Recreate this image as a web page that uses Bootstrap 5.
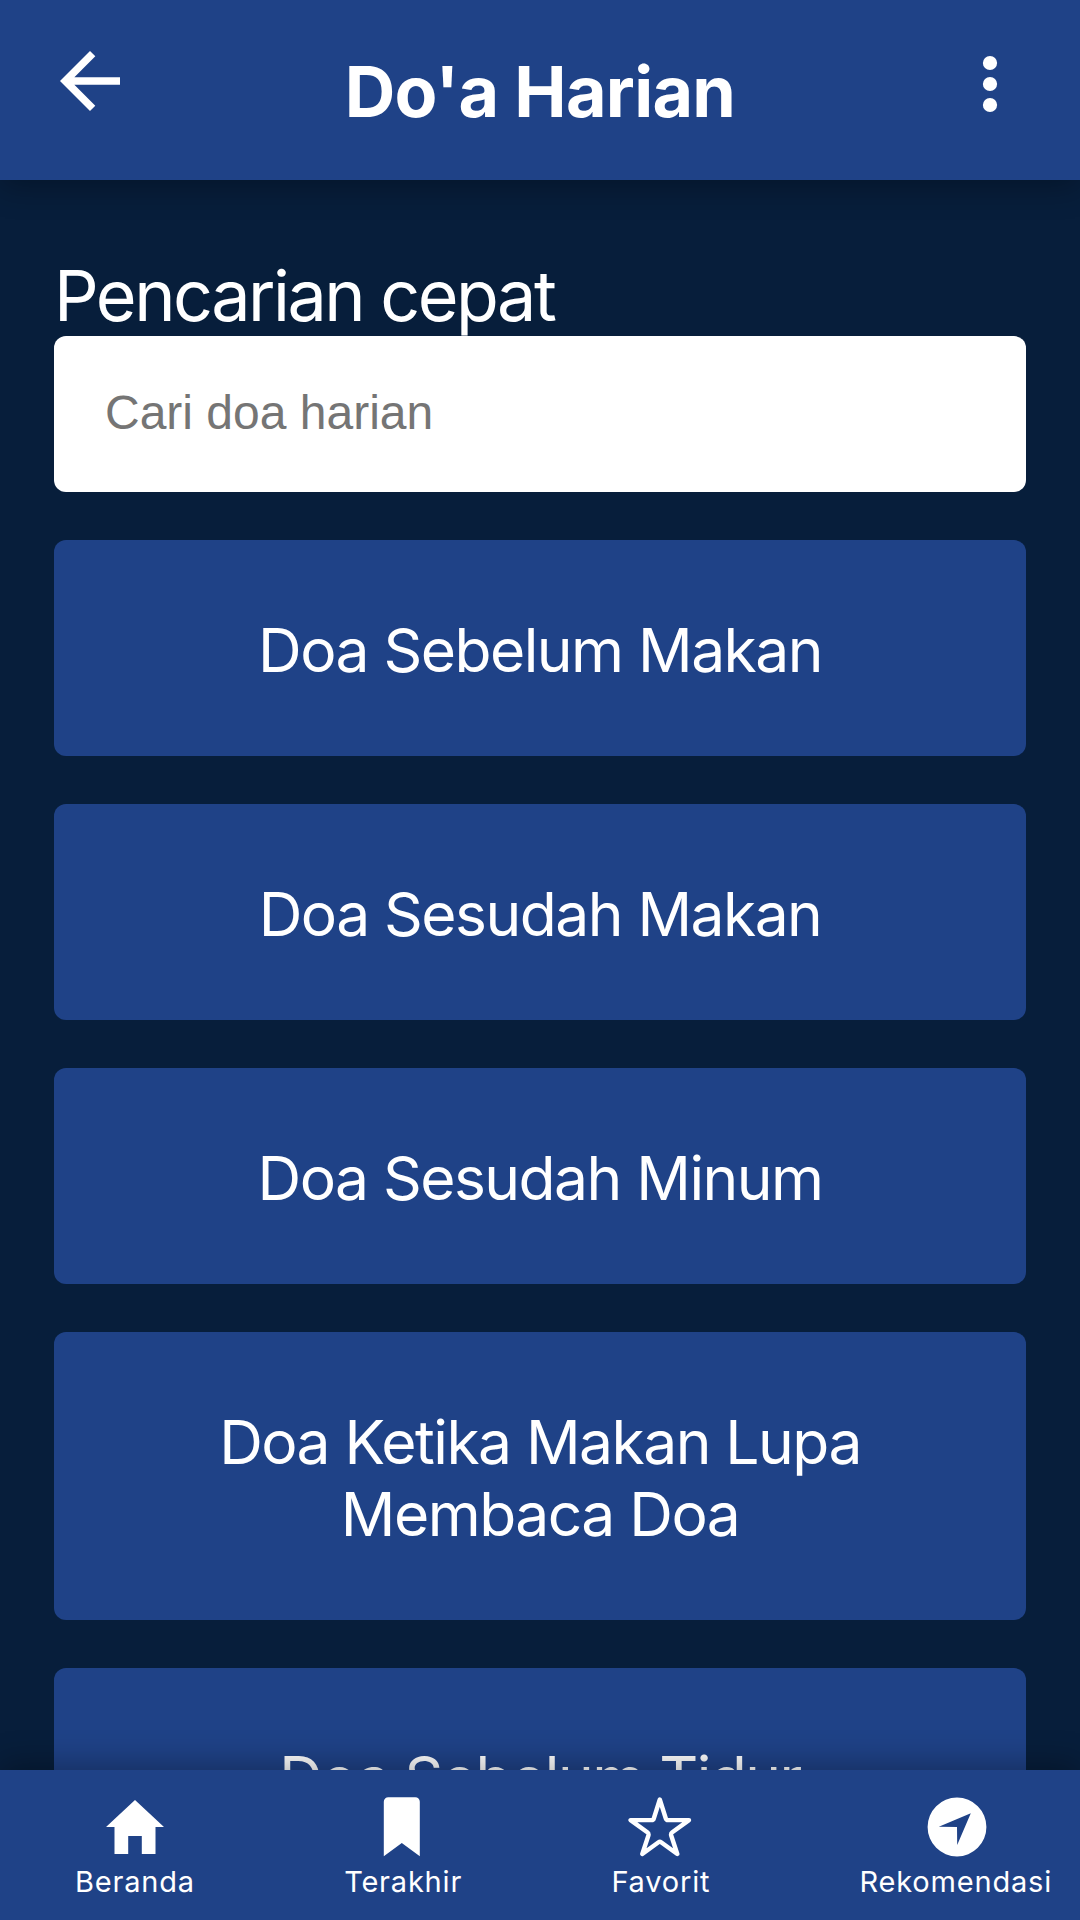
<!DOCTYPE html>
<html lang="id">
<head>
<meta charset="utf-8">
<meta name="viewport" content="width=device-width, initial-scale=1">
<title>Do'a Harian</title>
<link href="https://cdn.jsdelivr.net/npm/bootstrap@5.3.0/dist/css/bootstrap.min.css" rel="stylesheet">
<style>
  html, body { height: 100%; }
  body { background: #071e3b; color: #fff; font-family: Inter, sans-serif; overflow: hidden; }
  .bg-royal { background: #1f4287; }
  .app-header { height: 180px; padding: 36px 45px 0; box-shadow: 0 6px 30px rgba(0,0,0,.3); }
  .app-title { font-size: 70px; line-height: 84px; font-weight: 700; letter-spacing: -.7px; margin-top: 14px; }
  .app-main { padding: 74px 54px 0; }
  .search-label { font-size: 70px; line-height: 84px; letter-spacing: -2.5px; margin-bottom: -2px; }
  .search-input { height: 156px; border-radius: 12px; padding: 0 51px 4px; font: 48px "Liberation Sans", sans-serif; }
  .search-input::placeholder { color: #757575; opacity: 1; }
  .doa-list { gap: 48px; margin-top: 48px; }
  .doa-item { border-radius: 12px; padding: 74px 120px 70px; font-size: 60.5px; line-height: 72px; letter-spacing: -1.53px; color: #fff; }
  .app-nav { height: 150px; padding: 27px 28px 0 75px; box-shadow: 0 -6px 30px rgba(0,0,0,.3); }
  .nav-tab { font-size: 29px; line-height: 36px; letter-spacing: .8px; }
  .nav-tab svg { width: 66px; height: 60px; margin-bottom: 7px; }
</style>
</head>
<body>
<div class="d-flex flex-column h-100">
  <header class="app-header bg-royal d-flex justify-content-between align-items-start flex-shrink-0 position-relative z-2">
    <a href="#" class="text-white d-block lh-1" aria-label="Kembali"><svg width="90" height="90" viewBox="0 0 24 24" fill="currentColor"><path d="M20 11H7.83l5.59-5.59L12 4l-8 8 8 8 1.41-1.41L7.83 13H20v-2z"/></svg></a>
    <h1 class="app-title mb-0">Do'a Harian</h1>
    <a href="#" class="text-white d-block lh-1" aria-label="Menu"><svg width="90" height="90" viewBox="0 0 90 90" fill="currentColor"><circle cx="45" cy="27" r="7.1"/><circle cx="45" cy="48" r="7.1"/><circle cx="45" cy="69" r="7.1"/></svg></a>
  </header>
  <main class="app-main flex-grow-1 overflow-hidden">
    <label class="search-label d-block" for="cari">Pencarian cepat</label>
    <input id="cari" class="search-input form-control border-0 bg-white" type="text" placeholder="Cari doa harian">
    <div class="doa-list d-flex flex-column">
      <a href="#" class="doa-item bg-royal text-center text-decoration-none">Doa Sebelum Makan</a>
      <a href="#" class="doa-item bg-royal text-center text-decoration-none">Doa Sesudah Makan</a>
      <a href="#" class="doa-item bg-royal text-center text-decoration-none">Doa Sesudah Minum</a>
      <a href="#" class="doa-item bg-royal text-center text-decoration-none">Doa Ketika Makan Lupa Membaca Doa</a>
      <a href="#" class="doa-item bg-royal text-center text-decoration-none">Doa Sebelum Tidur</a>
    </div>
  </main>
  <nav class="app-nav bg-royal d-flex justify-content-between flex-shrink-0 position-relative z-2">
    <a href="#" class="nav-tab d-flex flex-column align-items-center text-white text-decoration-none"><svg viewBox="0 0 66 60" fill="currentColor"><path d="M33 3 62 30H53.5V57H39.8V39H26.2V57H12.5V30H4z"/></svg>Beranda</a>
    <a href="#" class="nav-tab d-flex flex-column align-items-center text-white text-decoration-none"><svg viewBox="3.200 0 66 60" fill="currentColor"><path d="M17 59.3V4.8a4.500 4.500 0 0 1 4.500-4.500h27a4.500 4.500 0 0 1 4.500 4.500V59.300L35 46z"/></svg>Terakhir</a>
    <a href="#" class="nav-tab d-flex flex-column align-items-center text-white text-decoration-none"><svg viewBox="2.200 0 66 60" fill="none" stroke="currentColor" stroke-width="4.400" stroke-linejoin="round"><path d="M34 2.500 40 21.500Q40.500 23.100 42.200 23.100H63.200L46.500 35.200Q44.800 36.500 45.400 38.500L51.500 57 35.300 45.300Q34 44.400 32.700 45.300L16.500 57 22.600 38.500Q23.200 36.500 21.500 35.200L4.800 23.100H25.800Q27.500 23.100 28 21.500z"/></svg>Favorit</a>
    <a href="#" class="nav-tab d-flex flex-column align-items-center text-white text-decoration-none"><svg viewBox="-1 0 66 60" fill="currentColor"><path fill-rule="evenodd" d="M33 .600a29.400 29.400 0 1 1 0 58.800a29.400 29.400 0 0 1 0-58.800zM46.800 16.300 14.800 29.700 33 30 33.200 48z"/></svg>Rekomendasi</a>
  </nav>
</div>
<script src="https://cdn.jsdelivr.net/npm/bootstrap@5.3.0/dist/js/bootstrap.bundle.min.js"></script>
</body>
</html>
